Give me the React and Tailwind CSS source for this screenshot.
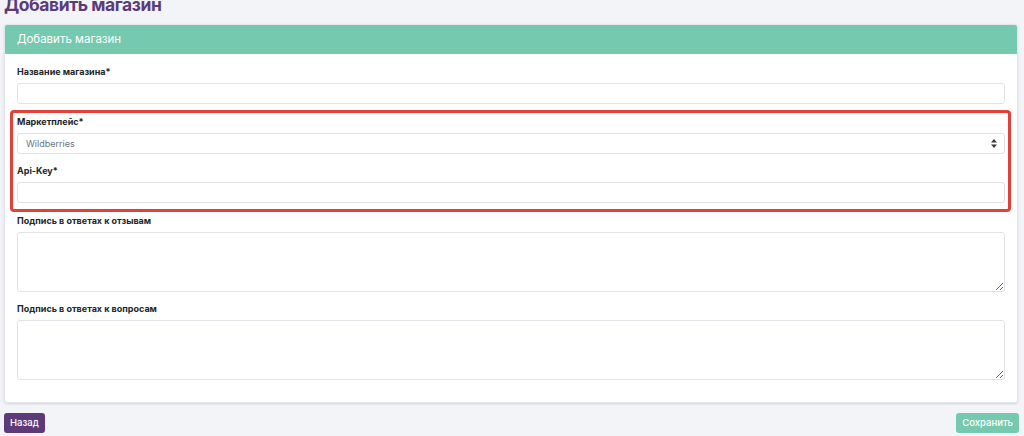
import React from 'react';

const Field = ({ label, gap = 'mb-[10px]', children }) => (
    <div className={gap}>
        <label className="block text-[9px] leading-[14px] font-bold text-[#212529] mb-[4px]">{label}</label>
        {children}
    </div>
);

const inputCls = "block w-full h-[21px] bg-white border border-[#dfe2e6] rounded-[3px] px-2 text-[9px] outline-none";
const areaCls = "block w-full h-[60px] bg-white border border-[#dfe2e6] rounded-[3px] px-2 text-[9px] outline-none";

const App = () => {
    return (
        <div className="w-[1024px] h-[436px] overflow-hidden bg-[#f3f4f8]" style={{ fontFamily: 'Inter, "Noto Sans", sans-serif' }}>
            <h1 className="ml-[4px] -mt-[7px] h-[31px] text-[17.5px] leading-[24px] font-bold tracking-tight text-[#5b3c78]">Добавить магазин</h1>

            <div className="mx-[4px] w-[1014px] bg-white border border-[#e3e5ea] rounded-[3px] shadow-sm overflow-hidden">
                <div className="h-[29px] bg-[#74c9ae] flex items-center px-[12px] text-[11.5px] text-white">
                    Добавить магазин
                </div>
                <div className="px-[12px] pt-[11px] pb-[22px]">
                    <Field label="Название магазина*" gap="mb-[11px]">
                        <input className={inputCls} />
                    </Field>

                    <div className="relative mb-[11px]">
                        <div className="absolute -left-[7px] -right-[6px] -top-[5px] -bottom-[9px] border-[3px] border-[#e2413a] rounded-[4px] pointer-events-none" />
                        <Field label="Маркетплейс*">
                            <div className="relative">
                                <select className={inputCls + " appearance-none text-[#6c757d]"} defaultValue="wb">
                                    <option value="wb">Wildberries</option>
                                    <option value="ozon">Ozon</option>
                                </select>
                                <svg className="absolute right-[8px] top-[6px] w-[6px] h-[9px]" viewBox="0 0 6 9">
                                    <path d="M3 0L6 3.5H0Z M3 9L0 5.5H6Z" fill="#343a40" />
                                </svg>
                            </div>
                        </Field>
                        <Field label="Api-Key*" gap="mb-0">
                            <input className={inputCls} />
                        </Field>
                    </div>

                    <Field label="Подпись в ответах к отзывам">
                        <textarea className={areaCls} />
                    </Field>
                    <Field label="Подпись в ответах к вопросам" gap="mb-0">
                        <textarea className={areaCls} />
                    </Field>
                </div>
            </div>

            <div className="mx-[4px] mt-[10px] flex justify-between">
                <button className="h-[20px] px-[6px] rounded-[3px] bg-[#5e3a7a] text-white text-[9.5px] font-medium">Назад</button>
                <button className="h-[20px] px-[6px] rounded-[3px] bg-[#74c9ae] text-white text-[9.5px] font-medium mr-[1px]">Сохранить</button>
            </div>
        </div>
    );
};

export default App;
